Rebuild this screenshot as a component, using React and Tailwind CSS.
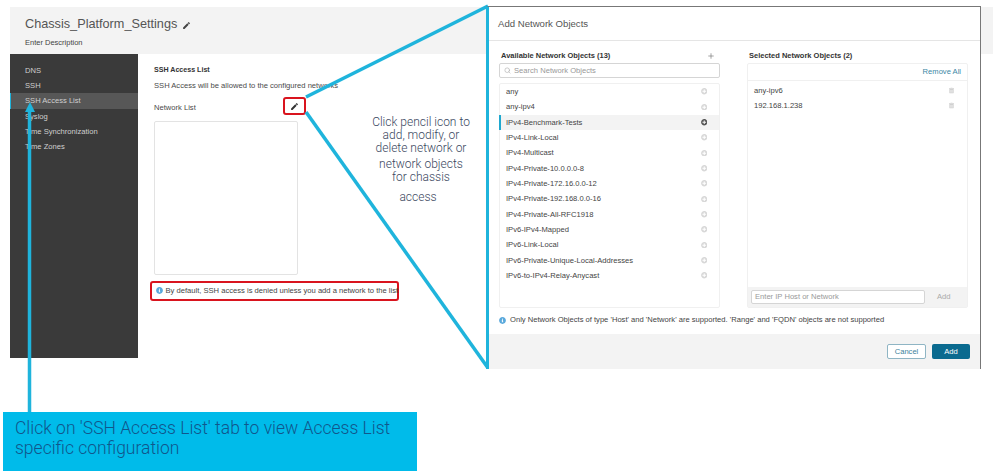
import React from "react";
import { FaInfoCircle, FaPlusCircle, FaTrashAlt } from "react-icons/fa";
import { MdEdit } from "react-icons/md";
import { Plus, Search } from "lucide-react";

const sideItems = ["DNS", "SSH", "SSH Access List", "Syslog", "Time Synchronization", "Time Zones"];

const available = [
  "any",
  "any-ipv4",
  "IPv4-Benchmark-Tests",
  "IPv4-Link-Local",
  "IPv4-Multicast",
  "IPv4-Private-10.0.0.0-8",
  "IPv4-Private-172.16.0.0-12",
  "IPv4-Private-192.168.0.0-16",
  "IPv4-Private-All-RFC1918",
  "IPv6-IPv4-Mapped",
  "IPv6-Link-Local",
  "IPv6-Private-Unique-Local-Addresses",
  "IPv6-to-IPv4-Relay-Anycast",
];

const selected = ["any-ipv6", "192.168.1.238"];

const App = () => {
  return (
    <div className="relative w-[999px] h-[475px] overflow-hidden bg-white pt-[7px] font-['Liberation_Sans',sans-serif] text-[7.6px] text-[#4a4a4a]">
      {/* Page header */}
      <div className="ml-[10px] mr-[6px] h-[47px] bg-[#f3f3f3] pl-[15px] pt-[9px]">
        <div className="flex items-center gap-[5px] h-[18px] text-[12.7px] text-[#555]">
          Chassis_Platform_Settings
          <MdEdit className="w-[9px] h-[9px] text-[#444]" />
        </div>
        <p className="mt-[3px] text-[7.5px] text-[#444]">Enter Description</p>
      </div>

      <div className="flex ml-[10px]">
        {/* Sidebar */}
        <div className="w-[128px] h-[304px] bg-[#3a3a3a] pt-[8.5px] text-[#cfcfcf]">
          {sideItems.map((item) => (
            <div
              key={item}
              className={
                item === "SSH Access List"
                  ? "h-[15.4px] leading-[15.4px] pl-[14px] bg-[#575757] border-l border-[#1fb4dc]"
                  : "h-[15.4px] leading-[15.4px] pl-[15px]"
              }
            >
              {item}
            </div>
          ))}
        </div>

        {/* SSH panel */}
        <div className="pl-[16px] pt-[11px]">
          <h3 className="h-[10px] leading-[10px] font-bold text-[7.1px] text-[#333]">SSH Access List</h3>
          <p className="mt-[5.5px] h-[10px] leading-[10px]">SSH Access will be allowed to the configured networks</p>
          <div className="mt-[11.5px] flex items-center justify-between w-[144px] h-[12px]">
            <span>Network List</span>
          </div>
          <div className="mt-[6.5px] w-[144px] h-[154px] bg-white border border-[#e3e3e3] rounded-[2px]" />
          <div className="-ml-[4px] mt-[6px] flex items-center gap-[3px] w-[249px] h-[20px] pl-[3.5px] border-[2.5px] border-[#d9141e] rounded-[3px] text-[#444]">
            <FaInfoCircle className="w-[7px] h-[7px] text-[#5aa9dc] shrink-0" />
            <span className="whitespace-nowrap">By default, SSH access is denied unless you add a network to the list</span>
          </div>
        </div>
      </div>

      {/* Red highlight on the pencil */}
      <div className="absolute left-[283px] top-[97px] w-[23px] h-[18px] flex items-center justify-center border-[2.5px] border-[#d9141e] rounded-[3px]">
        <MdEdit className="w-[9px] h-[9px] text-[#333]" />
      </div>

      {/* Callout lines */}
      <svg className="absolute left-0 top-0 pointer-events-none" width="999" height="475" viewBox="0 0 999 475">
        <line x1="306" y1="97" x2="488" y2="6" stroke="#1fb4dc" strokeWidth="3.5" />
        <line x1="306" y1="112" x2="488" y2="368" stroke="#1fb4dc" strokeWidth="3.5" />
        <line x1="29.5" y1="412" x2="29.5" y2="110" stroke="#1fb4dc" strokeWidth="3.5" />
        <polygon points="30,102 35,112 25,112" fill="#1fb4dc" />
      </svg>

      {/* Pencil callout text */}
      <div className="absolute left-[361px] top-[116px] w-[120px] text-center text-[12px] leading-[13px] font-light text-[#3a4760] font-['Roboto',sans-serif]">
        <div>Click pencil icon to</div>
        <div>add, modify, or</div>
        <div>delete network or</div>
        <div className="mt-[3px]">network objects</div>
        <div>for chassis</div>
        <div className="mt-[7px] pr-[6px]">access</div>
      </div>

      {/* Add Network Objects modal */}
      <div className="absolute left-[486px] top-[6px] w-[495px] h-[363px] flex flex-col bg-white border-t border-r border-[#777] border-l-[3px] border-l-[#1fb4dc]">
        <div className="h-[34px] shrink-0 flex items-center pl-[9px] pt-px border-b border-[#e5e5e5] text-[9.6px] text-[#555]">
          Add Network Objects
        </div>

        <div className="flex gap-[27px] pl-[10px] pt-[10px]">
          {/* Available */}
          <div className="w-[221px]">
            <div className="flex items-center justify-between h-[10px] pl-[2px] pr-[5px]">
              <span className="font-bold text-[7.5px] text-[#333]">Available Network Objects (13)</span>
              <Plus className="w-[8px] h-[8px] text-[#777]" />
            </div>
            <div className="mt-[2px] h-[15px] flex items-center gap-[3px] pl-[4px] border border-[#d5d5d5] rounded-[2px] text-[#999]">
              <Search className="w-[7px] h-[7px] text-[#aaa]" />
              Search Network Objects
            </div>
            <div className="mt-[5px] h-[225px] border border-[#f0f0f0] rounded-[2px]">
              {available.map((name) => (
                <div
                  key={name}
                  className={
                    name === "IPv4-Benchmark-Tests"
                      ? "flex items-center justify-between h-[15.33px] pl-[5px] pr-[12px] bg-[#f3f3f3] border-l-[2px] border-[#1fa8cf] -ml-px text-[#444]"
                      : "flex items-center justify-between h-[15.33px] pl-[6px] pr-[12px] text-[#444]"
                  }
                >
                  <span>{name}</span>
                  <FaPlusCircle
                    className={
                      name === "IPv4-Benchmark-Tests"
                        ? "w-[6.5px] h-[6.5px] text-[#555]"
                        : "w-[6.5px] h-[6.5px] text-[#d8d8d8]"
                    }
                  />
                </div>
              ))}
            </div>
          </div>

          {/* Selected */}
          <div className="w-[221px]">
            <div className="h-[10px] pl-[2px] flex items-center font-bold text-[7.5px] text-[#333]">
              Selected Network Objects (2)
            </div>
            <div className="mt-[2px] h-[245px] flex flex-col border border-[#f0f0f0] rounded-[2px]">
              <div className="h-[17px] shrink-0 flex items-center justify-end pr-[6px] border-b border-[#f0f0f0] text-[#3d87a5]">
                Remove All
              </div>
              <div className="flex-1 pt-[2px]">
                {selected.map((name) => (
                  <div key={name} className="flex items-center justify-between h-[15.33px] pl-[6px] pr-[13px] text-[#444]">
                    <span>{name}</span>
                    <FaTrashAlt className="w-[5px] h-[7px] text-[#cfcfcf]" />
                  </div>
                ))}
              </div>
              <div className="h-[20px] shrink-0 flex items-center gap-[12px] pl-[3px] bg-[#f3f3f3]">
                <div className="w-[174px] h-[14px] flex items-center pl-[3px] bg-white border border-[#d5d5d5] rounded-[2px] text-[#999]">
                  Enter IP Host or Network
                </div>
                <span className="text-[#aaa]">Add</span>
              </div>
            </div>
          </div>
        </div>

        <div className="flex items-center gap-[4px] pl-[10px] mt-[5px] h-[14px] text-[#444]">
          <FaInfoCircle className="w-[7px] h-[7px] text-[#5aa9dc]" />
          <span>Only Network Objects of type 'Host' and 'Network' are supported. 'Range' and 'FQDN' objects are not supported</span>
        </div>

        <div className="mt-auto h-[35px] flex items-center justify-end gap-[6px] pr-[10px] bg-[#f3f3f3]">
          <div className="w-[39px] h-[15px] flex items-center justify-center bg-white border border-[#8fb5c4] rounded-[2px] text-[#3d7f9c]">
            Cancel
          </div>
          <div className="w-[38px] h-[15px] flex items-center justify-center bg-[#0a6a8f] rounded-[2px] text-white">
            Add
          </div>
        </div>
      </div>

      {/* Bottom callout */}
      <div className="absolute left-[3px] top-[412px] w-[414px] h-[59px] bg-[#00bbea] pl-[12px] pt-[6px] text-[17.5px] leading-[20px] font-light text-[#11568c] font-['Roboto',sans-serif]">
        Click on 'SSH Access List' tab to view Access List
        <br />
        specific configuration
      </div>
    </div>
  );
};

export default App;
